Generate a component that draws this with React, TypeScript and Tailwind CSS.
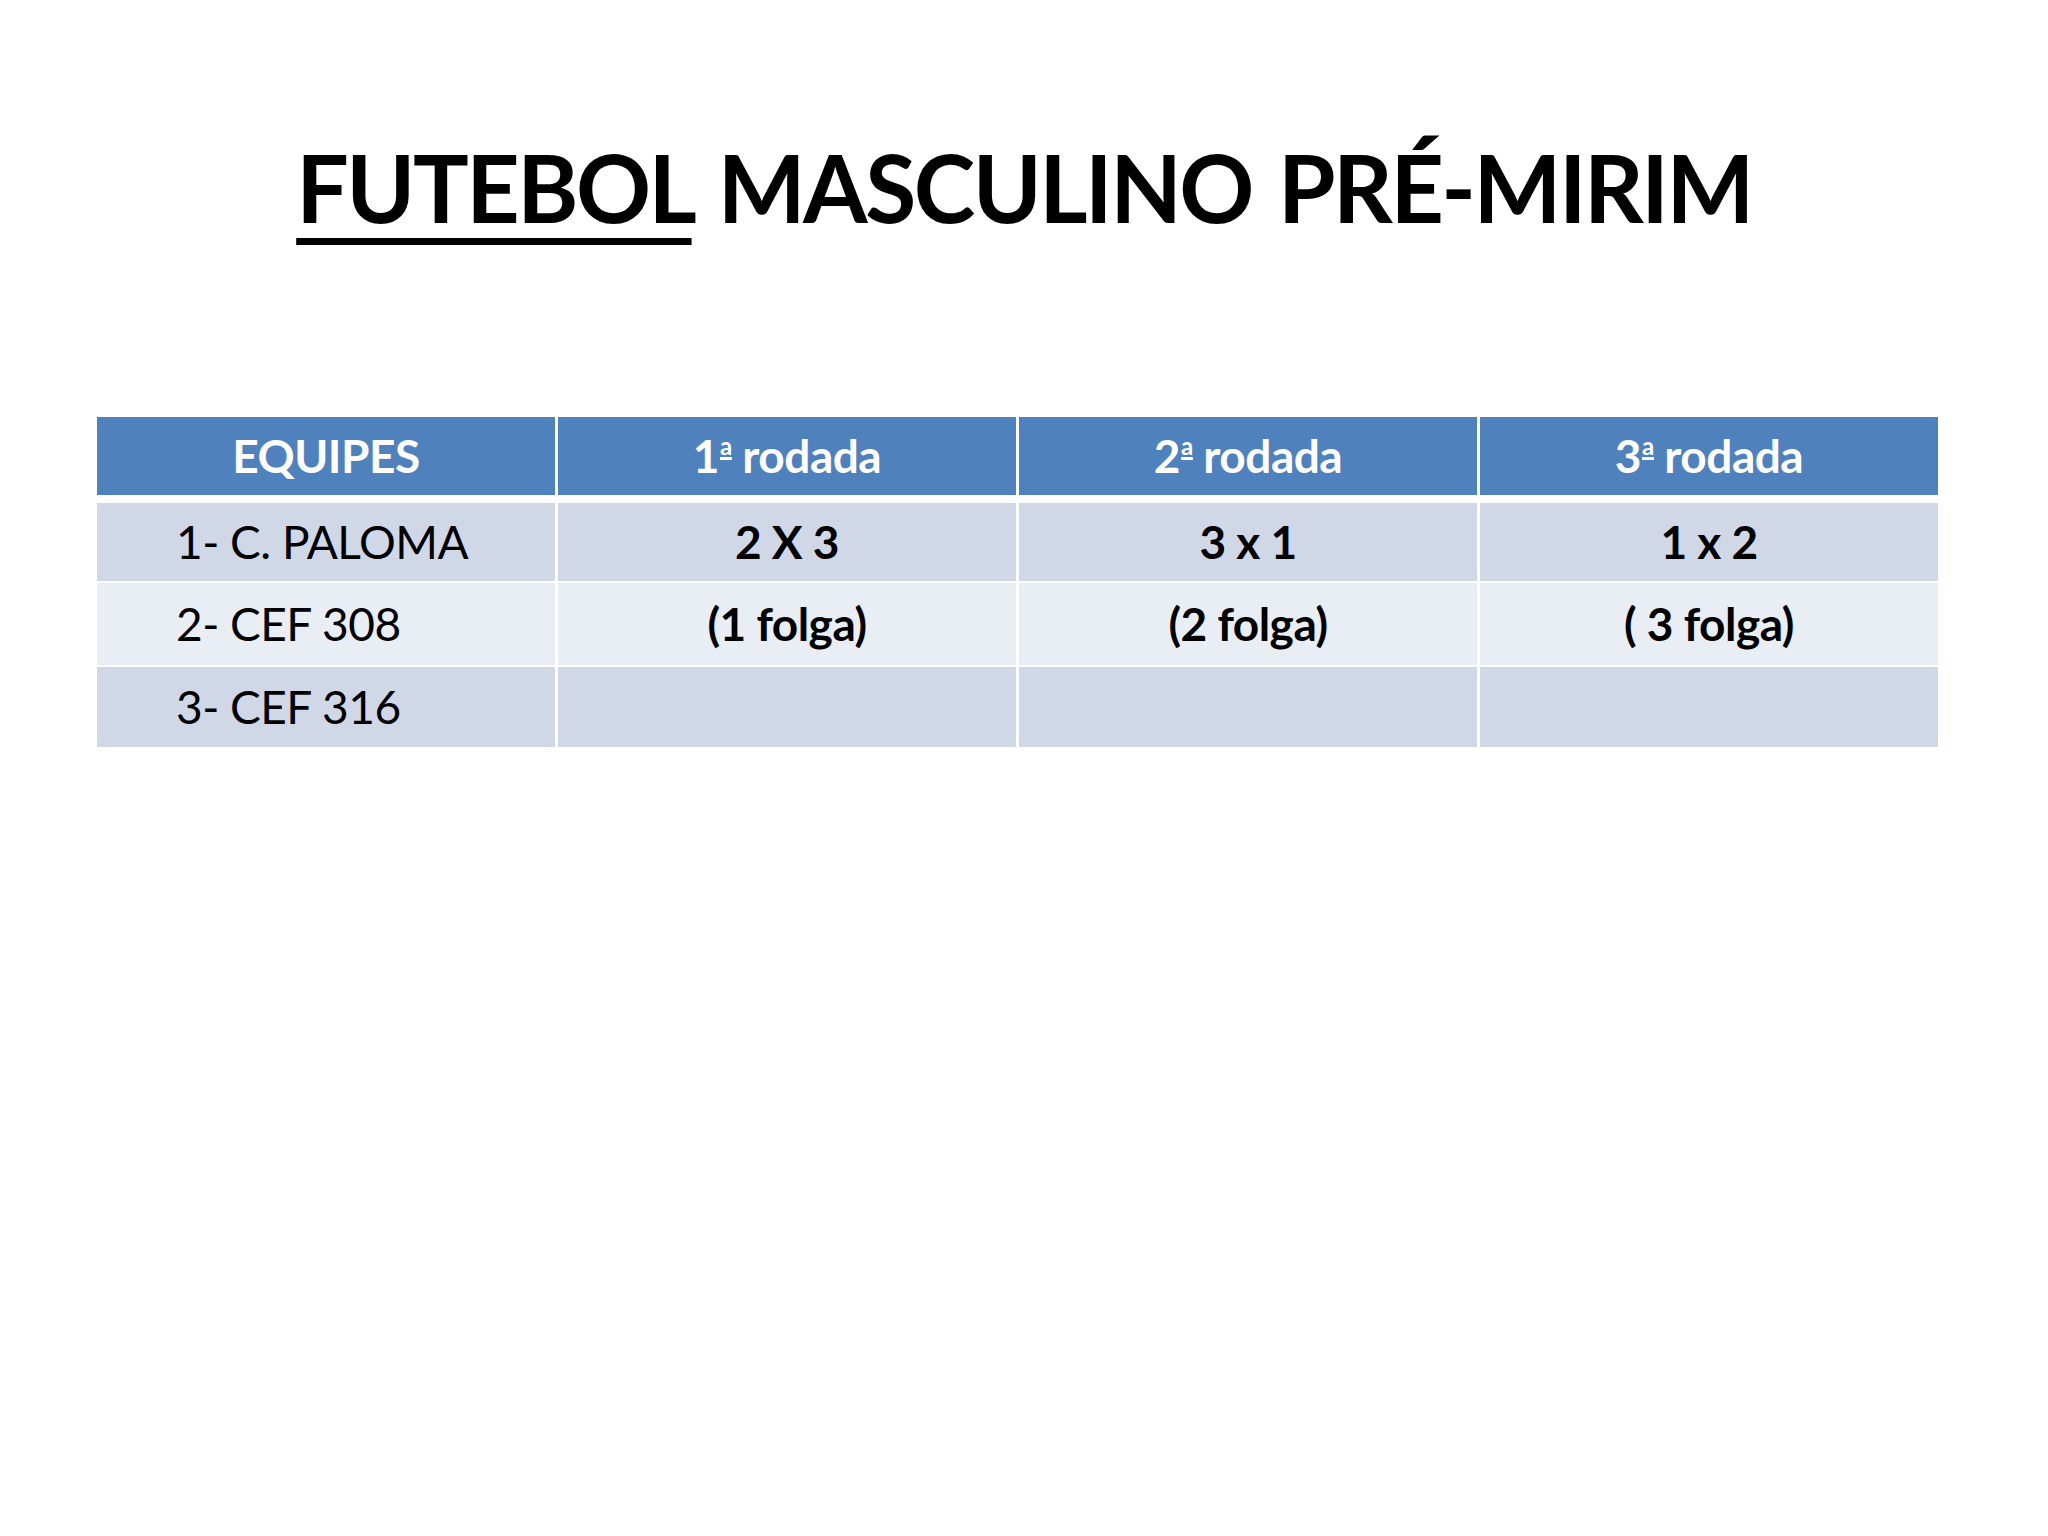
import React from 'react'

const font = { fontFamily: 'Lato, "Open Sans", sans-serif' }

const rows = [
  { team: '1- C. PALOMA', r1: '2 X 3', r2: '3 x 1', r3: '1 x 2', bg: 'bg-[#d0d8e8]', h: 'h-[78px]' },
  { team: '2- CEF 308', r1: '(1 folga)', r2: '(2 folga)', r3: '( 3 folga)', bg: 'bg-[#e9edf4]', h: 'h-[82px]' },
  { team: '3- CEF 316', r1: '', r2: '', r3: '', bg: 'bg-[#d0d8e8]', h: 'h-[80px]' },
]

// ordinal "ª" with the little bar beneath, as in the slide font
function Ord({ n }: { n: number }) {
  return (
    <>
      {n}
      <span className="ml-[1px] inline-block border-b-[3px] border-white align-[18px] text-[24px] leading-[0.9]">
        a
      </span>{' '}
      rodada
    </>
  )
}

export default function App() {
  return (
    <div className="min-h-[1536px] w-[2048px] bg-white text-black" style={font}>
      {/* Title */}
      <div className="pt-[132px] text-center">
        <h1 className="text-[93px] font-bold leading-[1.2] tracking-[-2.5px] [word-spacing:6px]">
          <span className="underline decoration-[7px] underline-offset-[15px]">FUTEBOL</span>{' '}
          MASCULINO PRÉ-MIRIM
        </h1>
      </div>

      {/* Table */}
      <div className="ml-[97px] mt-[173px] w-[1841px]">
        <div className="grid h-[78px] grid-cols-4 gap-x-[3px] text-[46px] font-bold tracking-[-0.5px] text-white">
          <div className="flex items-center justify-center bg-[#4f81bd]">EQUIPES</div>
          {[1, 2, 3].map((n) => (
            <div key={n} className="flex items-center justify-center bg-[#4f81bd]">
              <span>
                <Ord n={n} />
              </span>
            </div>
          ))}
        </div>
        <div className="mt-[8px] flex flex-col gap-y-[2px]">
          {rows.map((r) => (
            <div key={r.team} className={`grid grid-cols-4 gap-x-[3px] text-[46px] tracking-[-0.5px] ${r.h}`}>
              <div className={`flex items-center pl-[79px] ${r.bg}`}>{r.team}</div>
              <div className={`flex items-center justify-center font-bold ${r.bg}`}>{r.r1}</div>
              <div className={`flex items-center justify-center font-bold ${r.bg}`}>{r.r2}</div>
              <div className={`flex items-center justify-center font-bold ${r.bg}`}>{r.r3}</div>
            </div>
          ))}
        </div>
      </div>
    </div>
  )
}
